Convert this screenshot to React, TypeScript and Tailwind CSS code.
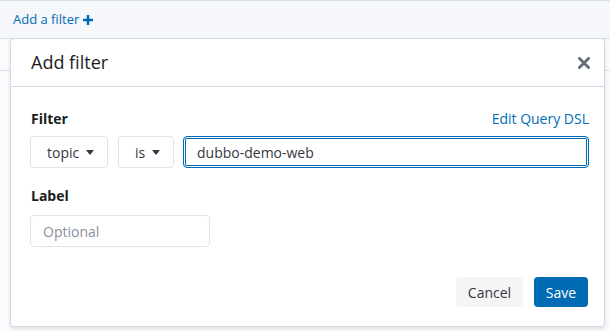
import React from "react";

function Caret() {
  return (
    <svg width="8" height="5" viewBox="0 0 8 5" aria-hidden="true">
      <path d="M0 0h8L4 5z" fill="#343741" />
    </svg>
  );
}

function SelectBox({ label, width }: { label: string; width: string }) {
  return (
    <div
      className={`${width} h-[32px] flex items-center justify-between pl-[16px] pr-[13px] border border-[#dfe3eb] rounded-[4px] bg-white text-[14px] text-[#343741]`}
    >
      <span>{label}</span>
      <Caret />
    </div>
  );
}

export default function App() {
  return (
    <div
      className="relative w-[610px] h-[331px] overflow-hidden bg-[#fafbfd]"
      style={{ fontFamily: '"Open Sans", "Liberation Sans", sans-serif' }}
    >
      {/* top filter bar */}
      <div className="h-[39px] border-t border-b border-[#d9dee8] bg-[#f5f7fa] flex items-center px-[13px] text-[13px] text-[#006bb4]">
        <span>Add a filter</span>
        <svg width="10" height="10" viewBox="0 0 10 10" className="ml-[4px]" aria-hidden="true">
          <path d="M3.7 0h2.6v3.7H10v2.6H6.3V10H3.7V6.3H0V3.7h3.7z" fill="#006bb4" />
        </svg>
      </div>
      <div className="h-[32px] border-b border-[#d9dee8]" />

      {/* modal */}
      <div className="absolute left-[10px] top-[38px] w-[595px] h-[289px] bg-white border border-[#d3dae6] rounded-[4px] shadow-[0_2px_4px_rgba(0,0,0,0.12)] flex flex-col">
        <div className="h-[48px] flex items-center justify-between pl-[20px] pr-[14px] border-b border-[#d3dae6]">
          <h2 className="text-[18px] text-[#1a1c21]">Add filter</h2>
          <svg width="12" height="12" viewBox="0 0 12 12" aria-hidden="true">
            <path d="M1.5 1.5l9 9M10.5 1.5l-9 9" stroke="#69707d" strokeWidth="3" strokeLinecap="round" />
          </svg>
        </div>

        <div className="flex-1 flex flex-col pl-[19px] pr-[15px] pt-[21px]">
          <div className="flex items-center justify-between text-[14px]">
            <span className="font-bold text-[#1a1c21] ml-[1px]">Filter</span>
            <span className="text-[#006bb4]">Edit Query DSL</span>
          </div>
          <div className="flex items-center mt-[7px]">
            <SelectBox label="topic" width="w-[78px]" />
            <div className="w-[10px]" />
            <SelectBox label="is" width="w-[56px]" />
            <div className="flex-1 ml-[9px] h-[32px] flex items-center px-[13px] border border-[#006bb4] rounded-[4px] shadow-[inset_0_0_0_1px_#fff,inset_0_0_0_2px_#006bb4] text-[14px] text-[#343741]">
              dubbo-demo-web
            </div>
          </div>

          <span className="mt-[17px] ml-[1px] text-[14px] font-bold text-[#1a1c21]">Label</span>
          <div className="mt-[9px] w-[180px] h-[32px] flex items-center px-[12px] border border-[#dfe3eb] rounded-[4px] text-[14px] text-[#8a919e]">
            Optional
          </div>

          <div className="flex justify-end gap-[11px] mt-[30px] mr-[1px]">
            <button className="w-[67px] h-[30px] rounded-[4px] bg-[#f5f5f5] text-[14px] text-[#343741]">
              Cancel
            </button>
            <button className="w-[54px] h-[30px] rounded-[4px] bg-[#006bb4] text-[14px] text-white">
              Save
            </button>
          </div>
        </div>
      </div>
    </div>
  );
}
